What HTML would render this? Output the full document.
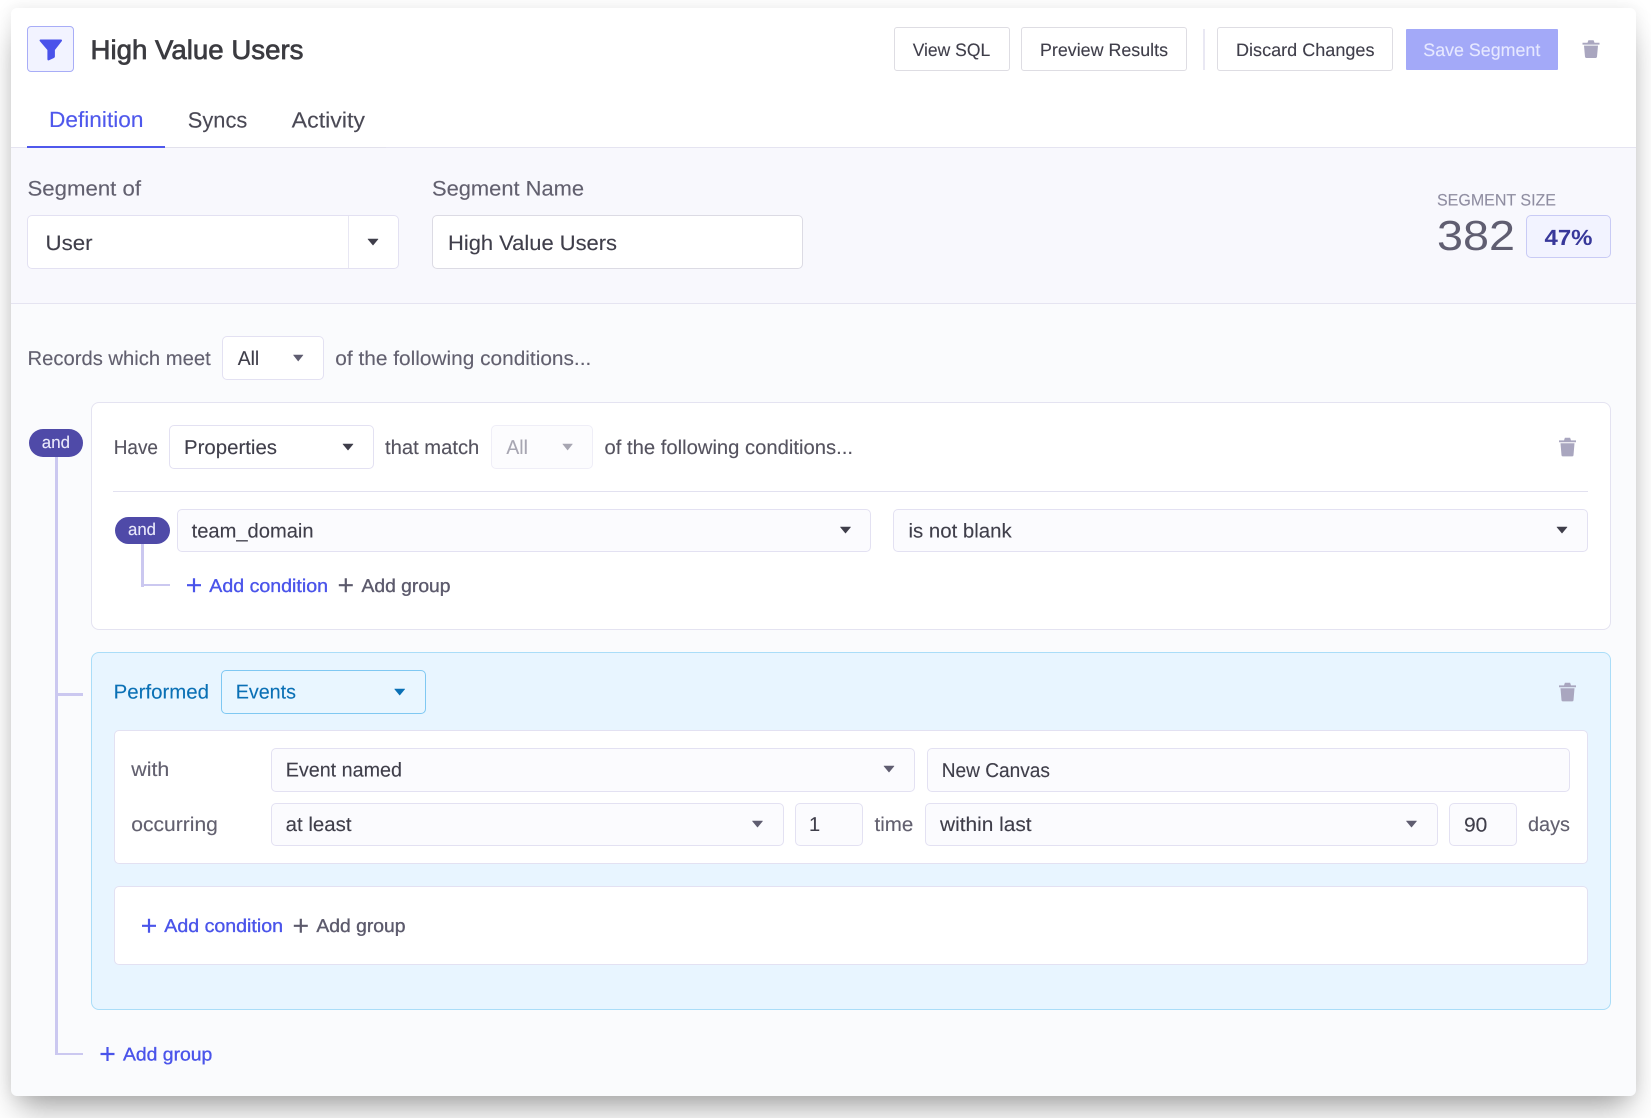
<!DOCTYPE html>
<html lang="en">
<head>
<meta charset="utf-8">
<title>High Value Users</title>
<style>
html,body{margin:0;padding:0;width:1651px;height:1118px;overflow:hidden;background:#fff;font-family:"Liberation Sans",sans-serif}
.b{position:absolute;box-sizing:border-box}
.card{left:11px;top:8px;width:1625px;height:1088px;background:#fafbfd;border-radius:6px;box-shadow:0 20px 30px -8px rgba(0,0,0,.34),0 0 16px rgba(0,0,0,.08)}
.sel{border:1.5px solid #e3e1f2;border-radius:5px;background:#fbfbfe}
.w{background:#fff}
.btn{border:1.5px solid #dedde3;border-radius:3px;background:#fff}
.ln{background:#cbc8f0}
svg{position:absolute;left:0;top:0}
text{font-family:"Liberation Sans",sans-serif;text-rendering:geometricPrecision;white-space:pre;stroke:currentColor;stroke-width:.12px}
.m{stroke-width:.35px}
</style>
</head>
<body>
<div class="b card"></div>
<div class="b" style="left:11px;top:8px;width:1625px;height:140px;background:#fff;border-radius:6px 6px 0 0"></div>
<div class="b" style="left:11px;top:147px;width:1625px;height:156.5px;background:#f8f8fd;border-top:1.5px solid #e5e4f1;border-bottom:1.5px solid #e5e4f1"></div>
<div class="b" style="left:27px;top:146.5px;width:359px;height:1.5px;background:#e2e1ec"></div>
<div class="b" style="left:27px;top:146px;width:138px;height:2px;background:#4f58ec"></div>

<div class="b" style="left:27px;top:26px;width:46.5px;height:46px;background:#f2f3ff;border:1.5px solid #a8adf7;border-radius:4px"></div>
<div class="b btn" style="left:894px;top:27px;width:116px;height:44px"></div>
<div class="b btn" style="left:1021px;top:27px;width:166px;height:44px"></div>
<div class="b" style="left:1203px;top:29px;width:1.5px;height:41px;background:#e9e8f3"></div>
<div class="b btn" style="left:1217px;top:27px;width:176px;height:44px"></div>
<div class="b" style="left:1406px;top:29px;width:152px;height:41px;background:#a3a9f8;border-radius:1px"></div>

<div class="b sel w" style="left:27px;top:215px;width:371.5px;height:54px"></div>
<div class="b" style="left:347.5px;top:216px;width:1.5px;height:52px;background:#e8e7f3"></div>
<div class="b w" style="left:432px;top:215px;width:370.5px;height:54px;border:1.5px solid #dcdbe4;border-radius:5px"></div>
<div class="b" style="left:1526px;top:215px;width:85px;height:43px;background:#f2f3ff;border:1.5px solid #c9cbf5;border-radius:5px"></div>

<div class="b sel w" style="left:222px;top:336px;width:102px;height:44px"></div>

<div class="b w" style="left:90.5px;top:402px;width:1520.5px;height:228px;border:1.5px solid #e4e3f1;border-radius:8px"></div>
<div class="b ln" style="left:55px;top:450px;width:2.5px;height:605px"></div>
<div class="b ln" style="left:55px;top:693px;width:28px;height:2.5px"></div>
<div class="b ln" style="left:55px;top:1052.5px;width:28px;height:2.8px"></div>
<div class="b" style="left:29px;top:429px;width:54px;height:28px;background:#4f4aa8;border-radius:14px"></div>

<div class="b sel w" style="left:169px;top:425px;width:204.5px;height:44px"></div>
<div class="b" style="left:491px;top:425px;width:101.5px;height:44px;border:1.5px solid #efeef7;border-radius:5px;background:#fcfcfe"></div>
<div class="b" style="left:113px;top:491px;width:1475px;height:1px;background:#e2e1f0"></div>

<div class="b ln" style="left:141px;top:540px;width:2.5px;height:46.5px"></div>
<div class="b ln" style="left:141px;top:583.5px;width:28.5px;height:2.8px"></div>
<div class="b" style="left:115px;top:516.7px;width:54.5px;height:27px;background:#4f4aa8;border-radius:14px"></div>
<div class="b sel" style="left:176.5px;top:508.7px;width:694.5px;height:43px"></div>
<div class="b sel" style="left:893px;top:508.7px;width:695px;height:43px"></div>

<div class="b" style="left:90.5px;top:652px;width:1520.5px;height:358px;background:#e8f5ff;border:1.5px solid #aaddf8;border-radius:8px"></div>
<div class="b" style="left:221px;top:670px;width:204.5px;height:43.5px;background:#e9f6ff;border:1.5px solid #7fc8f2;border-radius:5px"></div>

<div class="b w" style="left:113.5px;top:730px;width:1474.5px;height:134px;border:1.5px solid #e3e1f2;border-radius:5px"></div>
<div class="b sel" style="left:271px;top:748px;width:644px;height:43.5px"></div>
<div class="b sel" style="left:927px;top:748px;width:643px;height:43.5px"></div>
<div class="b sel" style="left:271px;top:802.7px;width:512.5px;height:43.5px"></div>
<div class="b sel" style="left:795px;top:802.7px;width:67.7px;height:43.5px"></div>
<div class="b sel" style="left:925px;top:802.7px;width:512.5px;height:43.5px"></div>
<div class="b sel" style="left:1449px;top:802.7px;width:67.5px;height:43.5px"></div>
<div class="b w" style="left:113.5px;top:886px;width:1474.5px;height:79px;border:1.5px solid #e3e1f2;border-radius:5px"></div>

<svg width="1651" height="1118" viewBox="0 0 1651 1118" xmlns="http://www.w3.org/2000/svg">
<!-- funnel -->
<path d="M40.5 39.5H61a1 1 0 0 1 .8 1.6L54.9 50V56.5Q54.9 57.5 53.9 58L49 60.3Q47.4 60.8 47.4 59V50L39.7 41A1 1 0 0 1 40.5 39.5z" fill="#4a52ea"/>

<!-- header text -->
<text x="90.5" y="59" font-size="27" textLength="213" lengthAdjust="spacingAndGlyphs" fill="#3b3b40" class="m" style="color:#3b3b40;stroke-width:.7px">High Value Users</text>
<text x="49" y="127" font-size="22" textLength="94.5" lengthAdjust="spacingAndGlyphs" fill="#4f58ec" style="color:#4f58ec">Definition</text>
<text x="187.8" y="127.5" font-size="22" textLength="59.5" lengthAdjust="spacingAndGlyphs" fill="#4a4955" style="color:#4a4955">Syncs</text>
<text x="291.7" y="127.5" font-size="22" textLength="73.3" lengthAdjust="spacingAndGlyphs" fill="#4a4955" style="color:#4a4955">Activity</text>

<text x="912.7" y="56" font-size="18" textLength="77.5" lengthAdjust="spacingAndGlyphs" fill="#3f3e4a" style="color:#3f3e4a">View SQL</text>
<text x="1040" y="56" font-size="18" textLength="128" lengthAdjust="spacingAndGlyphs" fill="#3f3e4a" style="color:#3f3e4a">Preview Results</text>
<text x="1236" y="56" font-size="18" textLength="138.5" lengthAdjust="spacingAndGlyphs" fill="#3f3e4a" style="color:#3f3e4a">Discard Changes</text>
<text x="1423.3" y="56" font-size="18" textLength="117" lengthAdjust="spacingAndGlyphs" fill="#e6e8ff" style="color:#e6e8ff">Save Segment</text>
<path d="M1582.5 42.8H1599.5V44.6H1582.5zM1587.5 42.8L1588.4 40.2H1593.6L1594.5 42.8zM1584 45.6H1598L1597 56.8a1.3 1.3 0 0 1-1.3 1.2H1586.3a1.3 1.3 0 0 1-1.3-1.2z" fill="#a9a6bf"/>

<!-- segment row -->
<text x="27.5" y="195.5" font-size="21" textLength="113.5" lengthAdjust="spacingAndGlyphs" fill="#62606f" style="color:#62606f">Segment of</text>
<text x="432" y="195.5" font-size="21" textLength="152" lengthAdjust="spacingAndGlyphs" fill="#62606f" style="color:#62606f">Segment Name</text>
<text x="45.5" y="250" font-size="21" textLength="47" lengthAdjust="spacingAndGlyphs" fill="#3f3e4a" style="color:#3f3e4a">User</text>
<text x="448" y="250" font-size="21" textLength="169" lengthAdjust="spacingAndGlyphs" fill="#3f3e4a" style="color:#3f3e4a">High Value Users</text>
<path d="M368 239H378L373 245z" fill="#3f3e4a" stroke="#3f3e4a" stroke-linejoin="round" stroke-width=".6"/>
<text x="1437" y="205.5" font-size="16.5" textLength="119" lengthAdjust="spacingAndGlyphs" fill="#8f8da1" style="color:#8f8da1">SEGMENT SIZE</text>
<text x="1437" y="250" font-size="42" textLength="78" lengthAdjust="spacingAndGlyphs" fill="#605e71" style="color:#605e71;stroke-width:0">382</text>
<text x="1544.5" y="245" font-size="22" font-weight="700" textLength="48" lengthAdjust="spacingAndGlyphs" fill="#38389a" style="color:#38389a;stroke-width:0">47%</text>

<!-- records -->
<text x="27.5" y="365" font-size="20" textLength="183.2" lengthAdjust="spacingAndGlyphs" fill="#62606f" style="color:#62606f">Records which meet</text>
<text x="237.7" y="365" font-size="20" textLength="21.5" lengthAdjust="spacingAndGlyphs" fill="#3f3e4a" style="color:#3f3e4a">All</text>
<path d="M293.5 355H303L298.2 361z" fill="#5f5d70" stroke="#5f5d70" stroke-linejoin="round" stroke-width=".6"/>
<text x="335.3" y="365" font-size="20" textLength="256" lengthAdjust="spacingAndGlyphs" fill="#62606f" style="color:#62606f">of the following conditions...</text>

<!-- group 1 -->
<text x="41.8" y="448" font-size="17" textLength="28.2" lengthAdjust="spacingAndGlyphs" fill="#e9e8fa" style="color:#e9e8fa">and</text>
<text x="113.7" y="454" font-size="20" textLength="44.3" lengthAdjust="spacingAndGlyphs" fill="#55535f" style="color:#55535f">Have</text>
<text x="184" y="454" font-size="20" textLength="93" lengthAdjust="spacingAndGlyphs" fill="#3f3e4a" style="color:#3f3e4a">Properties</text>
<path d="M343 444H353L348 450z" fill="#3f3e4a" stroke="#3f3e4a" stroke-linejoin="round" stroke-width=".6"/>
<text x="385" y="454" font-size="20" textLength="94.3" lengthAdjust="spacingAndGlyphs" fill="#55535f" style="color:#55535f">that match</text>
<text x="506.4" y="454" font-size="20" textLength="21.5" lengthAdjust="spacingAndGlyphs" fill="#a7a6b2" style="color:#a7a6b2">All</text>
<path d="M562.8 444H572.4L567.6 450z" fill="#a7a6b2" stroke="#a7a6b2" stroke-linejoin="round" stroke-width=".6"/>
<text x="604.5" y="454" font-size="20" textLength="248.5" lengthAdjust="spacingAndGlyphs" fill="#55535f" style="color:#55535f">of the following conditions...</text>
<path d="M1559 440.4H1576V442.2H1559zM1564 440.4L1564.9 437.8H1570.1L1571 440.4zM1560.5 443.2H1574.5L1573.5 455.2a1.3 1.3 0 0 1-1.3 1.2H1562.8a1.3 1.3 0 0 1-1.3-1.2z" fill="#a9a6bf"/>

<text x="128" y="535" font-size="17" textLength="28" lengthAdjust="spacingAndGlyphs" fill="#e9e8fa" style="color:#e9e8fa">and</text>
<text x="191.6" y="537.3" font-size="20" textLength="122" lengthAdjust="spacingAndGlyphs" fill="#3f3e4a" style="color:#3f3e4a">team_domain</text>
<path d="M840.5 527H850.5L845.5 533z" fill="#3f3e4a" stroke="#3f3e4a" stroke-linejoin="round" stroke-width=".6"/>
<text x="908.5" y="537.3" font-size="20" textLength="103.2" lengthAdjust="spacingAndGlyphs" fill="#3f3e4a" style="color:#3f3e4a">is not blank</text>
<path d="M1557 527H1567L1562 533z" fill="#3f3e4a" stroke="#3f3e4a" stroke-linejoin="round" stroke-width=".6"/>

<path d="M194 578.2V592.2M187 585.2H201" stroke="#4a54ea" stroke-width="2.2" fill="none"/>
<text x="209.3" y="592" font-size="18.5" textLength="118.7" lengthAdjust="spacingAndGlyphs" fill="#4a54ea" class="m" style="color:#4a54ea">Add condition</text>
<path d="M345.8 578.2V592.2M338.8 585.2H352.8" stroke="#5c5a6c" stroke-width="2.2" fill="none"/>
<text x="361.5" y="592" font-size="18.5" textLength="89" lengthAdjust="spacingAndGlyphs" fill="#5c5a6c" class="m" style="color:#5c5a6c">Add group</text>

<!-- group 2 -->
<text x="113.7" y="698.3" font-size="20" textLength="95.3" lengthAdjust="spacingAndGlyphs" fill="#0a70b5" style="color:#0a70b5">Performed</text>
<text x="235.7" y="698.3" font-size="20" textLength="60.3" lengthAdjust="spacingAndGlyphs" fill="#0a70b5" style="color:#0a70b5">Events</text>
<path d="M394.7 689H404.7L399.7 695z" fill="#0a70b5" stroke="#0a70b5" stroke-linejoin="round" stroke-width=".6"/>
<path d="M1559 685.4H1576V687.2H1559zM1564 685.4L1564.9 682.8H1570.1L1571 685.4zM1560.5 688.2H1574.5L1573.5 700.2a1.3 1.3 0 0 1-1.3 1.2H1562.8a1.3 1.3 0 0 1-1.3-1.2z" fill="#a9a6bf"/>

<text x="131.3" y="776" font-size="20" textLength="38" lengthAdjust="spacingAndGlyphs" fill="#62606f" style="color:#62606f">with</text>
<text x="285.7" y="776.3" font-size="20" textLength="116.3" lengthAdjust="spacingAndGlyphs" fill="#3f3e4a" style="color:#3f3e4a">Event named</text>
<path d="M884 766H894L889 772z" fill="#5f5d70" stroke="#5f5d70" stroke-linejoin="round" stroke-width=".6"/>
<text x="941.7" y="777" font-size="20" textLength="108.3" lengthAdjust="spacingAndGlyphs" fill="#3f3e4a" style="color:#3f3e4a">New Canvas</text>

<text x="131.3" y="831" font-size="20" textLength="86.6" lengthAdjust="spacingAndGlyphs" fill="#62606f" style="color:#62606f">occurring</text>
<text x="285.7" y="831" font-size="20" textLength="65.8" lengthAdjust="spacingAndGlyphs" fill="#3f3e4a" style="color:#3f3e4a">at least</text>
<path d="M752.5 821H762.5L757.5 827z" fill="#5f5d70" stroke="#5f5d70" stroke-linejoin="round" stroke-width=".6"/>
<text x="809" y="831" font-size="20" fill="#3f3e4a" style="color:#3f3e4a">1</text>
<text x="874.5" y="831" font-size="20" textLength="38.8" lengthAdjust="spacingAndGlyphs" fill="#62606f" style="color:#62606f">time</text>
<text x="940" y="831" font-size="20" textLength="91.6" lengthAdjust="spacingAndGlyphs" fill="#3f3e4a" style="color:#3f3e4a">within last</text>
<path d="M1406.5 821H1416.5L1411.5 827z" fill="#5f5d70" stroke="#5f5d70" stroke-linejoin="round" stroke-width=".6"/>
<text x="1464" y="831.3" font-size="20" textLength="23.3" lengthAdjust="spacingAndGlyphs" fill="#3f3e4a" style="color:#3f3e4a">90</text>
<text x="1528" y="831" font-size="20" textLength="42" lengthAdjust="spacingAndGlyphs" fill="#62606f" style="color:#62606f">days</text>

<path d="M149 918.8V932.8M142 925.8H156" stroke="#4a54ea" stroke-width="2.2" fill="none"/>
<text x="164.3" y="932" font-size="18.5" textLength="118.7" lengthAdjust="spacingAndGlyphs" fill="#4a54ea" class="m" style="color:#4a54ea">Add condition</text>
<path d="M300.8 918.8V932.8M293.8 925.8H307.8" stroke="#5c5a6c" stroke-width="2.2" fill="none"/>
<text x="316.4" y="932" font-size="18.5" textLength="89.1" lengthAdjust="spacingAndGlyphs" fill="#5c5a6c" class="m" style="color:#5c5a6c">Add group</text>

<path d="M107.5 1047V1061M100.5 1054H114.5" stroke="#4a54ea" stroke-width="2.2" fill="none"/>
<text x="123" y="1060.7" font-size="18.5" textLength="89.3" lengthAdjust="spacingAndGlyphs" fill="#4a54ea" class="m" style="color:#4a54ea">Add group</text>
</svg>
</body>
</html>
